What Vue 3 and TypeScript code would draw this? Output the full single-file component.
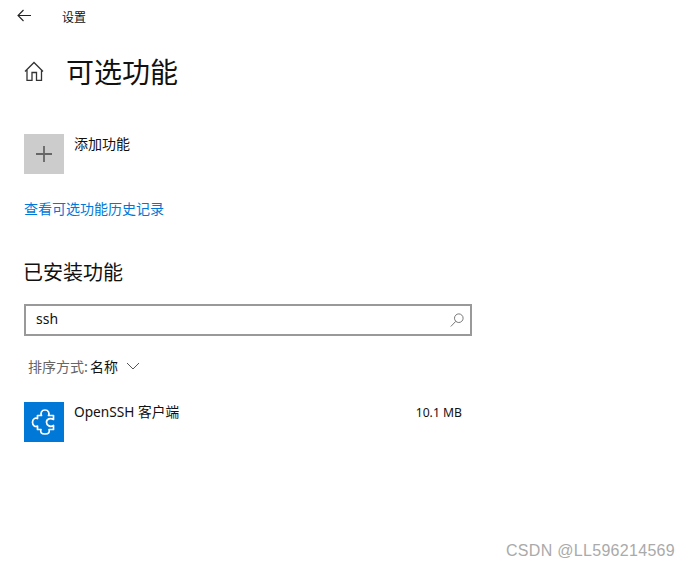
<script setup lang="ts">
const title = '可选功能'
</script>

<template>
  <div class="page">
    <header class="topbar">
      <svg class="back" width="16" height="16" viewBox="0 0 16 16" fill="none" stroke="#222" stroke-width="1.1">
        <path d="M15 7.500H2M7.500 2 2 7.500 7.500 13" />
      </svg>
      <span class="top-title">设置</span>
    </header>
    <div class="heading">
      <svg class="home" width="20" height="20" viewBox="0 0 20 20" fill="none" stroke="#333" stroke-width="1.300">
        <path d="M1 10.500 10 1.500l9 9M3 8.500V19.500h5V11.500h4.500v8h5V8.500" />
      </svg>
      <h1>{{ title }}</h1>
    </div>
    <div class="add">
      <div class="add-box">
        <svg width="18" height="18" viewBox="0 0 18 18" stroke="#666" stroke-width="1.800"><path d="M9 1v16M1 9h16" /></svg>
      </div>
      <span class="label">添加功能</span>
    </div>
    <a class="link">查看可选功能历史记录</a>
    <h2>已安装功能</h2>
    <div class="search">
      <span class="query">ssh</span>
      <svg width="16" height="16" viewBox="0 0 16 16" fill="none" stroke="#777" stroke-width="1"><circle cx="9.800" cy="6.200" r="4.300" /><path d="M6.800 9.300 1.800 14.500" /></svg>
    </div>
    <div class="sort">
      <span class="sort-key">排序方式:</span>
      <span class="sort-val">名称</span>
      <svg width="14" height="8" viewBox="0 0 14 8" fill="none" stroke="#555" stroke-width="1"><path d="M1 1l6 6 6-6" /></svg>
    </div>
    <div class="row">
      <div class="tile">
        <svg width="40" height="40" viewBox="0 0 40 40" fill="none" stroke="#fff" stroke-width="1.700" stroke-linejoin="round">
          <path d="M13.500 13.500H17.500C16.300 11 17.500 8 21 8S25.700 11 24.500 13.500H29.500V17.500C26.500 15.500 22.500 17 22.500 20.300S26.500 25.500 29.500 23.500V27.500H25C26 30 25 32 21 32S16 30 17 27.500H13.500V24C11.500 25.200 8.500 24 8.500 20.300S11.500 15.400 13.500 16.500Z" />
        </svg>
      </div>
      <span class="label name">OpenSSH 客户端</span>
      <span class="size">10.1 MB</span>
    </div>
    <div class="mark">CSDN @LL596214569</div>
  </div>
</template>

<style>
html, body { margin: 0; background: #fff; }
</style>

<style scoped>
.page {
  position: relative;
  width: 690px;
  height: 566px;
  overflow: hidden;
  box-sizing: border-box;
  padding-left: 24px;
  font-family: "Noto Sans CJK SC", "Noto Sans", sans-serif;
  color: #111;
}
.topbar { display: flex; align-items: center; height: 32px; margin-left: -8px; }
.back { flex: none; }
.top-title { margin-left: 30px; font-size: 12px; }
.heading { display: flex; align-items: center; margin-top: 20px; height: 38px; }
.home { flex: none; }
h1 { margin: 0 0 0 23px; font-size: 28px; font-weight: 400; line-height: 38px; transform: translateX(-1px); }
.add { display: flex; align-items: flex-start; margin-top: 44px; }
.add-box { width: 40px; height: 40px; background: #ccc; display: flex; align-items: center; justify-content: center; }
.label { font-size: 14px; line-height: 20px; margin-left: 10px; margin-top: -1px; }
.link { display: block; margin-top: 24px; font-size: 14px; line-height: 20px; color: #0078d7; }
h2 { margin: 40px 0 0 -1px; font-size: 20px; font-weight: 400; line-height: 28px; }
.search {
  box-sizing: border-box;
  width: 448px;
  height: 32px;
  margin-top: 18px;
  border: 2px solid #999;
  display: flex;
  align-items: center;
  justify-content: space-between;
  padding: 0 5px 0 10px;
}
.query { font-size: 14px; font-family: "Noto Sans", sans-serif; margin-top: -3px; }
.sort { display: flex; align-items: center; margin: 20px 0 0 4px; height: 20px; font-size: 14px; }
.sort-key { color: #666; }
.sort-val { margin-left: 2px; color: #111; }
.sort svg { margin-left: 8px; }
.row { display: flex; align-items: flex-start; margin-top: 26px; width: 438px; }
.tile { width: 40px; height: 40px; background: #0078d7; display: flex; align-items: center; justify-content: center; flex: none; }
.name { flex: 1; font-family: "Noto Sans", "Noto Sans CJK SC", sans-serif; font-size: 13.7px; margin-top: 0; }
.size { font-size: 12.200px; line-height: 20px; font-family: "Noto Sans", sans-serif; margin-top: 1px; }
.mark {
  position: absolute;
  right: 15px;
  bottom: 6px;
  font-family: "Liberation Sans", sans-serif;
  font-size: 16px;
  letter-spacing: 0.3px;
  color: #aaa;
}
</style>
